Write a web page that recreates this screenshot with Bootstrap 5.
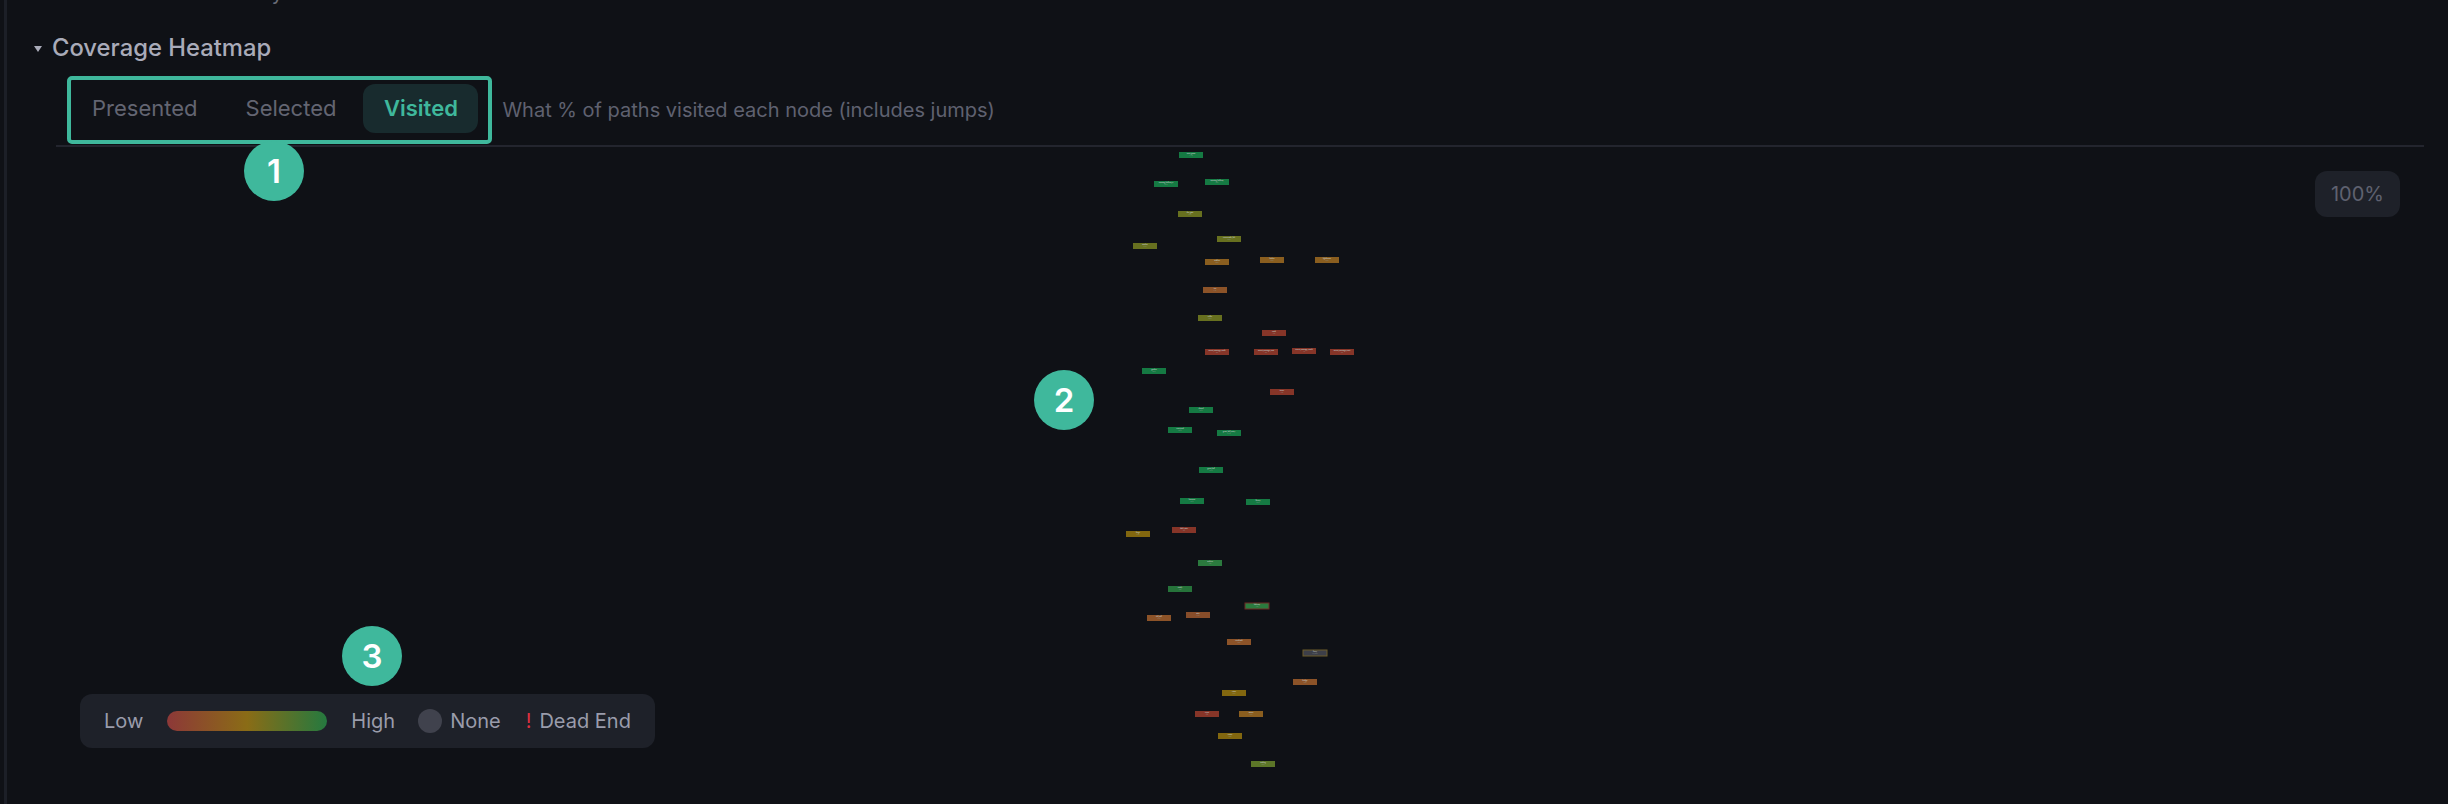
<!DOCTYPE html>
<html lang="en" data-bs-theme="dark">
<head>
<meta charset="utf-8">
<title>Coverage Heatmap</title>
<link href="https://cdn.jsdelivr.net/npm/bootstrap@5.3.0/dist/css/bootstrap.min.css" rel="stylesheet">
<style>
html,body{height:804px;overflow:hidden;background:#0f1116;font-family:Inter,"Liberation Sans",sans-serif}
.shell{height:804px}
.rail{width:7px;background:#0f1116;border-right:3px solid #1c1f27;flex:none}
.main-col{min-width:0}
.clip-line{overflow:visible;color:#6a6c78;font-size:20px;line-height:24px;padding-left:47px;margin-top:-19px;height:19px;white-space:nowrap}
.hm-head{padding-left:27px;margin-top:31px;height:33px;color:#a9abb9;font-size:23.8px;font-weight:500;line-height:33px;gap:10px}
.caret{width:0;height:0;border-left:4px solid transparent;border-right:4px solid transparent;border-top:6px solid #a9abb9;margin-top:2px}
.tabbar{margin:12px 24px 0 49px;height:71px;border-bottom:2px solid #23252e;padding-left:11px}
.tab-frame{height:68px;border:4px solid #3fb89c;border-radius:5px;padding:4px 10px 7px 0;gap:6px}
.tab-item{height:49px;padding:0 21px;border:0;background:none;color:#636572;font-size:22px;line-height:49px;border-radius:12px;font-family:inherit}
.tab-item.on{background:#182b2e;color:#3fb89c;font-weight:600;padding:0 20.5px}
.tab-note{color:#5f6170;font-size:20px;margin-left:10px;margin-top:-2px}
.canvas-area{flex:1;min-height:0}
.graph{position:absolute;left:0;top:0}
.zoom-chip{position:absolute;right:48px;top:24px;width:85px;height:46px;background:#1e2129;border-radius:12px;color:#5f6170;font-size:20px}
.legend-box{position:absolute;left:73px;top:547px;width:575px;height:54px;background:#1e2129;border-radius:12px;color:#9a9cab;font-size:20px;padding-left:24px}
.ramp{width:160px;height:20px;border-radius:10px;background:linear-gradient(90deg,#8d3838,#8a6c16 50%,#25793f);margin:0 24px 0 24px}
.none-dot{width:24px;height:24px;border-radius:50%;background:#40424d;margin:0 8px 0 23px}
.bang{color:#dc3040;margin:0 8px 0 25px}
.callout{position:absolute;width:60px;height:60px;border-radius:50%;background:#3fb89c;color:#fff;font-size:33px;font-weight:600;line-height:60px;text-align:center}
.c1{left:237px;top:-6px}.c2{left:1027px;top:223px}.c3{left:335px;top:479px}
.nd text{font-family:Inter,"Liberation Sans",sans-serif;font-size:1.6px;fill:#c4cbc8;text-anchor:middle;font-weight:600}
.nd text+text{font-size:1.3px;fill:#8f9a95;font-weight:400}
.g1{fill:#157a43}.g2{fill:#2b7a3e}.g3{fill:#26733a}.o1{fill:#67701f}.o2{fill:#5c7628}
.b1{fill:#8a5e1f}.b2{fill:#8c5328}.b3{fill:#874d2a}.a1{fill:#82670f}
.r1{fill:#863528}.n1{fill:#3d3f49}
.nd rect.rb{stroke:#6e2a24;stroke-width:1}.nd rect.tb{stroke:#6d5c2a;stroke-width:1}
</style>
</head>
<body>
<div class="d-flex shell">
  <div class="rail"></div>
  <div class="main-col flex-grow-1 d-flex flex-column">
    <div class="clip-line">Based on all of the story nodes that were run</div>
    <div class="hm-head d-flex align-items-center"><span class="caret"></span><span>Coverage Heatmap</span></div>
    <div class="tabbar d-flex">
      <div class="tab-frame d-flex">
        <button class="tab-item" type="button">Presented</button>
        <button class="tab-item" type="button">Selected</button>
        <button class="tab-item on" type="button">Visited</button>
      </div>
      <div class="tab-note d-flex align-items-center">What % of paths visited each node (includes jumps)</div>
    </div>
    <div class="canvas-area position-relative">
      <svg class="graph" width="2441" height="657" viewBox="7 147 2441 657" xmlns="http://www.w3.org/2000/svg">
        <g class="nd" transform="translate(1179 152)"><rect class="g1" width="24" height="6"/><text x="12" y="2.2">start_game</text><text x="12" y="4.2">100%</text></g>
        <g class="nd" transform="translate(1154 181)"><rect class="g1" width="24" height="6"/><text x="12" y="2.2">opening_hallway_a</text><text x="12" y="4.2">94%</text></g>
        <g class="nd" transform="translate(1205 179)"><rect class="g1" width="24" height="6"/><text x="12" y="2.2">opening_hallway</text><text x="12" y="4.2">91%</text></g>
        <g class="nd" transform="translate(1178 211)"><rect class="o1" width="24" height="6"/><text x="12" y="2.2">the_gate</text><text x="12" y="4.2">62%</text></g>
        <g class="nd" transform="translate(1217 236)"><rect class="o1" width="24" height="6"/><text x="12" y="2.2">crossroads_left</text><text x="12" y="4.2">58%</text></g>
        <g class="nd" transform="translate(1133 243)"><rect class="o1" width="24" height="6"/><text x="12" y="2.2">market</text><text x="12" y="4.2">60%</text></g>
        <g class="nd" transform="translate(1205 259)"><rect class="b1" width="24" height="6"/><text x="12" y="2.2">stables</text><text x="12" y="4.2">38%</text></g>
        <g class="nd" transform="translate(1260 257)"><rect class="b1" width="24" height="6"/><text x="12" y="2.2">harbor</text><text x="12" y="4.2">36%</text></g>
        <g class="nd" transform="translate(1315 257)"><rect class="b1" width="24" height="6"/><text x="12" y="2.2">lighthouse</text><text x="12" y="4.2">34%</text></g>
        <g class="nd" transform="translate(1203 287)"><rect class="b2" width="24" height="6"/><text x="12" y="2.2">inn</text><text x="12" y="4.2">27%</text></g>
        <g class="nd" transform="translate(1198 315)"><rect class="o1" width="24" height="6"/><text x="12" y="2.2">cellar</text><text x="12" y="4.2">55%</text></g>
        <g class="nd" transform="translate(1262 330)"><rect class="r1" width="24" height="6"/><text x="12" y="2.2">vault</text><text x="12" y="4.2">11%</text></g>
        <g class="nd" transform="translate(1205 349)"><rect class="r1" width="24" height="6"/><text x="12" y="2.2">secret_passage_north</text><text x="12" y="4.2">8%</text></g>
        <g class="nd" transform="translate(1254 349)"><rect class="r1" width="24" height="6"/><text x="12" y="2.2">secret_passage_east</text><text x="12" y="4.2">9%</text></g>
        <g class="nd" transform="translate(1292 348)"><rect class="r1" width="24" height="6"/><text x="12" y="2.2">secret_passage_south</text><text x="12" y="4.2">7%</text></g>
        <g class="nd" transform="translate(1330 349)"><rect class="r1" width="24" height="6"/><text x="12" y="2.2">secret_passage_west</text><text x="12" y="4.2">6%</text></g>
        <g class="nd" transform="translate(1142 368)"><rect class="g1" width="24" height="6"/><text x="12" y="2.2">garden</text><text x="12" y="4.2">88%</text></g>
        <g class="nd" transform="translate(1270 389)"><rect class="r1" width="24" height="6"/><text x="12" y="2.2">tower</text><text x="12" y="4.2">10%</text></g>
        <g class="nd" transform="translate(1189 407)"><rect class="g1" width="24" height="6"/><text x="12" y="2.2">chapel</text><text x="12" y="4.2">86%</text></g>
        <g class="nd" transform="translate(1168 427)"><rect class="g1" width="24" height="6"/><text x="12" y="2.2">courtyard</text><text x="12" y="4.2">85%</text></g>
        <g class="nd" transform="translate(1217 430)"><rect class="g1" width="24" height="6"/><text x="12" y="2.2">great_hall_entry</text><text x="12" y="4.2">87%</text></g>
        <g class="nd" transform="translate(1199 467)"><rect class="g1" width="24" height="6"/><text x="12" y="2.2">great_hall</text><text x="12" y="4.2">90%</text></g>
        <g class="nd" transform="translate(1180 498)"><rect class="g1" width="24" height="6"/><text x="12" y="2.2">banquet</text><text x="12" y="4.2">84%</text></g>
        <g class="nd" transform="translate(1246 499)"><rect class="g1" width="24" height="6"/><text x="12" y="2.2">library</text><text x="12" y="4.2">83%</text></g>
        <g class="nd" transform="translate(1126 531)"><rect class="a1" width="24" height="6"/><text x="12" y="2.2">forge</text><text x="12" y="4.2">42%</text></g>
        <g class="nd" transform="translate(1172 527)"><rect class="r1" width="24" height="6"/><text x="12" y="2.2">dark_stair</text><text x="12" y="4.2">9%</text></g>
        <g class="nd" transform="translate(1198 560)"><rect class="g2" width="24" height="6"/><text x="12" y="2.2">archive</text><text x="12" y="4.2">74%</text></g>
        <g class="nd" transform="translate(1168 586)"><rect class="g3" width="24" height="6"/><text x="12" y="2.2">study</text><text x="12" y="4.2">76%</text></g>
        <g class="nd" transform="translate(1245 603)"><rect class="g2 rb" width="24" height="6"/><text x="12" y="2.2">balcony</text><text x="12" y="4.2">72%</text></g>
        <g class="nd" transform="translate(1186 612)"><rect class="b3" width="24" height="6"/><text x="12" y="2.2">attic</text><text x="12" y="4.2">22%</text></g>
        <g class="nd" transform="translate(1147 615)"><rect class="b2" width="24" height="6"/><text x="12" y="2.2">old_mill</text><text x="12" y="4.2">30%</text></g>
        <g class="nd" transform="translate(1227 639)"><rect class="b2" width="24" height="6"/><text x="12" y="2.2">riverbank</text><text x="12" y="4.2">28%</text></g>
        <g class="nd" transform="translate(1303 650)"><rect class="n1 tb" width="24" height="6"/><text x="12" y="2.2">ferry</text><text x="12" y="4.2">no_visits</text></g>
        <g class="nd" transform="translate(1293 679)"><rect class="b2" width="24" height="6"/><text x="12" y="2.2">bridge</text><text x="12" y="4.2">29%</text></g>
        <g class="nd" transform="translate(1222 690)"><rect class="a1" width="24" height="6"/><text x="12" y="2.2">ruins</text><text x="12" y="4.2">44%</text></g>
        <g class="nd" transform="translate(1195 711)"><rect class="r1" width="24" height="6"/><text x="12" y="2.2">crypt</text><text x="12" y="4.2">12%</text></g>
        <g class="nd" transform="translate(1239 711)"><rect class="b1" width="24" height="6"/><text x="12" y="2.2">mines</text><text x="12" y="4.2">33%</text></g>
        <g class="nd" transform="translate(1218 733)"><rect class="a1" width="24" height="6"/><text x="12" y="2.2">camp</text><text x="12" y="4.2">45%</text></g>
        <g class="nd" transform="translate(1251 761)"><rect class="o2" width="24" height="6"/><text x="12" y="2.2">ending</text><text x="12" y="4.2">66%</text></g>
      </svg>
      <div class="zoom-chip d-flex align-items-center justify-content-center">100%</div>
      <div class="legend-box d-flex align-items-center">
        <span>Low</span><span class="ramp"></span><span>High</span><span class="none-dot"></span><span>None</span><span class="bang">!</span><span>Dead End</span>
      </div>
      <div class="callout c1">1</div>
      <div class="callout c2">2</div>
      <div class="callout c3">3</div>
    </div>
  </div>
</div>
</body>
</html>
